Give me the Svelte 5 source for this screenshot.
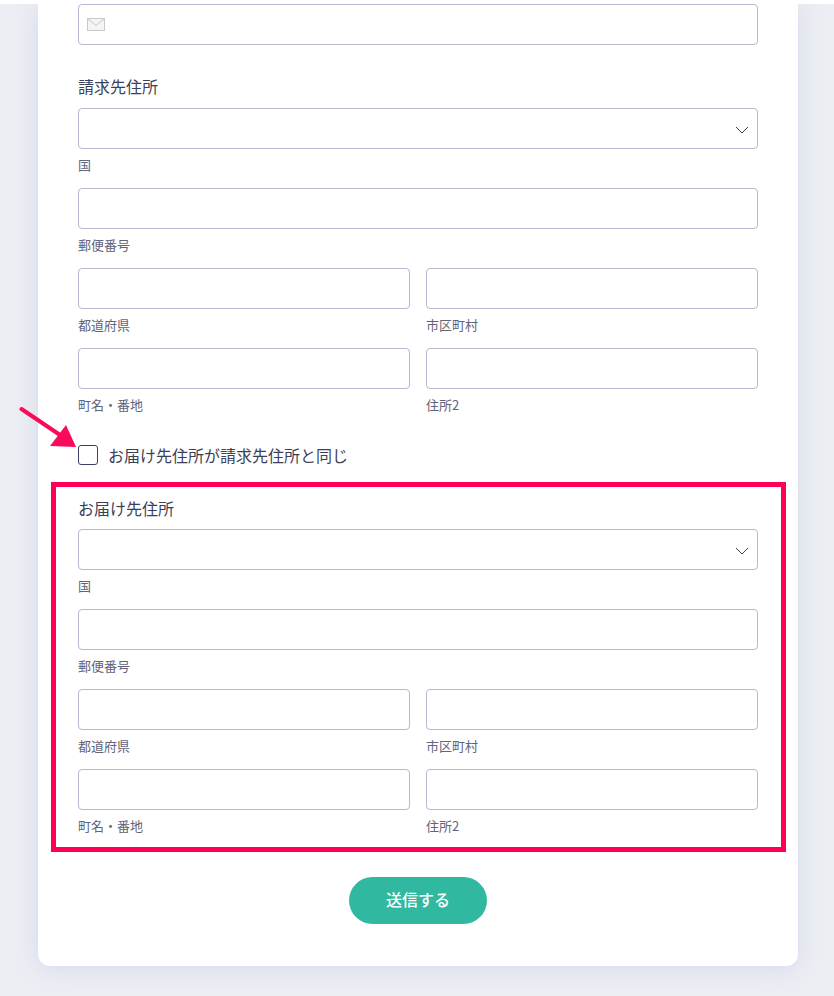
<script>
  const rows = [
    [{ label: '都道府県' }, { label: '市区町村' }],
    [{ label: '町名・番地' }, { label: '住所2' }]
  ];
</script>

{#snippet address(title)}
  <h2 class="title">{title}</h2>
  <div class="field">
    <div class="input select">
      <svg class="chevron" width="14" height="8" viewBox="0 0 14 8" fill="none"><path d="M1 1l6 6 6-6" stroke="#3c3f58" stroke-width="1"/></svg>
    </div>
    <span class="hint">国</span>
  </div>
  <div class="field">
    <div class="input"></div>
    <span class="hint">郵便番号</span>
  </div>
  {#each rows as row}
    <div class="row">
      {#each row as f}
        <div class="field">
          <div class="input"></div>
          <span class="hint">{f.label}</span>
        </div>
      {/each}
    </div>
  {/each}
{/snippet}

<div class="page">
  <main class="card">
    <div class="input email">
      <svg width="18" height="13" viewBox="0 0 18 13" fill="none"><rect x="0.5" y="0.5" width="17" height="12" fill="#f4f4f4" stroke="#c9c9c9"/><path d="M1 1l8 6.5L17 1" stroke="#c9c9c9"/></svg>
    </div>

    <section class="billing">
      {@render address('請求先住所')}
    </section>

    <div class="same">
      <svg class="arrow" width="60" height="46" viewBox="0 0 60 46"><path d="M2.500 3L44 31" stroke="#fb0a5a" stroke-width="4" stroke-linecap="round"/><path d="M57 41L31 40L47 19z" fill="#fb0a5a"/></svg>
      <span class="check"></span>
      <span class="same-text">お届け先住所が請求先住所と同じ</span>
    </div>

    <section class="shipping">
      <div class="frame"></div>
      {@render address('お届け先住所')}
    </section>

    <div class="actions">
      <button class="submit"><span class="submit-text">送信する</span></button>
    </div>
  </main>
</div>

<style>
  :global(body) {
    margin: 0;
    background: #fff;
  }
  .page {
    margin-top: 4px;
    height: 992px;
    background: #eceef4;
    overflow: hidden;
    font-family: "Noto Sans CJK JP", "Noto Sans", sans-serif;
    color: #3c3f58;
  }
  .card {
    box-sizing: border-box;
    width: 760px;
    height: 962px;
    margin-left: 38px;
    padding: 0 40px;
    background: #fff;
    border-radius: 0 0 12px 12px;
    box-shadow: 0 2px 22px rgba(190, 198, 225, 0.5);
  }
  .input {
    box-sizing: border-box;
    position: relative;
    height: 41px;
    background: #fff;
    border: 1px solid #b9b8d3;
    border-radius: 4px;
  }
  .email {
    display: flex;
    align-items: center;
    padding-left: 8px;
  }
  .billing {
    margin-top: 30px;
  }
  .title {
    margin: 0 0 10px;
    font-size: 16px;
    font-weight: 400;
    line-height: 23px;
  }
  .field {
    flex: 1;
    height: 80px;
  }
  .hint {
    display: block;
    margin-top: 6px;
    font-size: 13px;
    line-height: 19px;
    color: #62647a;
  }
  .row {
    display: flex;
    gap: 16px;
  }
  .chevron {
    position: absolute;
    right: 8px;
    top: 17px;
  }
  .same {
    position: relative;
    display: flex;
    align-items: center;
    gap: 10px;
    height: 20px;
    margin-top: 17px;
  }
  .arrow {
    position: absolute;
    left: -59px;
    top: -39px;
  }
  .check {
    box-sizing: border-box;
    width: 20px;
    height: 20px;
    border: 1px solid #3c3f66;
    border-radius: 3px;
    background: #fff;
  }
  .same-text {
    font-size: 16px;
    line-height: 20px;
  }
  .shipping {
    position: relative;
    margin-top: 31px;
  }
  .shipping .title {
    position: relative;
    top: 1px;
  }
  .frame {
    position: absolute;
    box-sizing: border-box;
    left: -27px;
    right: -28px;
    top: -14px;
    height: 370px;
    border: 5px solid #ff0055;
    pointer-events: none;
  }
  .actions {
    display: flex;
    justify-content: center;
    margin-top: 28px;
  }
  .submit {
    width: 138px;
    height: 47px;
    padding: 0;
    border: 0;
    border-radius: 24px;
    background: #31b8a0;
    color: #fff;
    font: 500 16px "Noto Sans CJK JP", sans-serif;
  }
  .submit-text {
    position: relative;
    top: -2px;
  }
</style>
